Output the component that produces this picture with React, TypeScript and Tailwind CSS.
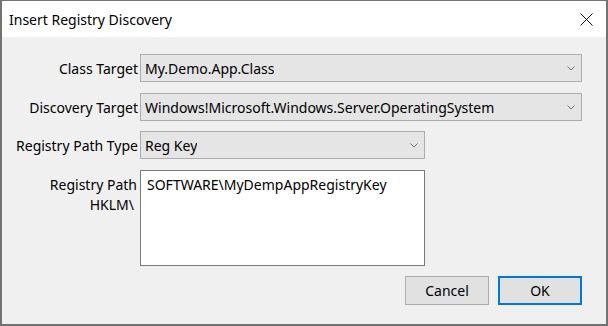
import React from "react";

function Chevron() {
  return (
    <svg width="8" height="5" viewBox="0 0 8 5" className="shrink-0">
      <path d="M0.5 0.5 L4 4 L7.5 0.5" fill="none" stroke="#707070" strokeWidth="1" />
    </svg>
  );
}

function Combo({ value, width }: { value: string; width: string }) {
  return (
    <div className={`${width} h-[28px] flex items-center justify-between bg-[#e5e5e5] border border-[#adadad] pl-[4px] pr-[6px]`}>
      <span className="truncate">{value}</span>
      <Chevron />
    </div>
  );
}

export default function App() {
  return (
    <div
      className="w-[608px] h-[326px] border-2 border-t border-[#737373] bg-[#f0f0f0] flex flex-col text-[14px] text-black overflow-hidden"
      style={{ fontFamily: '"Noto Sans", "Open Sans", sans-serif' }}
    >
      <div className="h-[36px] bg-white flex items-center justify-between pl-[7px] pr-[13px] shrink-0">
        <span className="text-[14px] pt-[1px]">Insert Registry Discovery</span>
        <svg width="13" height="13" viewBox="0 0 13 13">
          <path d="M0.5 0.5 L12.5 12.5 M12.5 0.5 L0.5 12.5" stroke="#111" strokeWidth="1" />
        </svg>
      </div>

      <div className="flex flex-col pt-[17px] pl-[1px]">
        <div className="flex items-center gap-[2px]">
          <div className="w-[135px] text-right whitespace-nowrap">Class Target</div>
          <Combo value="My.Demo.App.Class" width="w-[442px]" />
        </div>
        <div className="flex items-center gap-[2px] mt-[11px]">
          <div className="w-[135px] text-right whitespace-nowrap">Discovery Target</div>
          <Combo value="Windows!Microsoft.Windows.Server.OperatingSystem" width="w-[442px]" />
        </div>
        <div className="flex items-center gap-[2px] mt-[10px]">
          <div className="w-[135px] text-right whitespace-nowrap">Registry Path Type</div>
          <Combo value="Reg Key" width="w-[285px]" />
        </div>
        <div className="flex items-start gap-[2px] mt-[11px]">
          <div className="w-[135px] text-right leading-[20px] pt-[5px] pr-[1px]">
            <div>Registry Path</div>
            <div className="pr-[3px]">HKLM\</div>
          </div>
          <div className="w-[285px] h-[96px] bg-white border border-[#7a7a7a] px-[6px] pt-[4px] leading-[20px]">
            SOFTWARE\MyDempAppRegistryKey
          </div>
        </div>
        <div className="flex justify-end gap-[9px] mt-[10px] pr-[24px]">
          <button className="w-[84px] h-[29px] bg-[#e1e1e1] border border-[#adadad]">Cancel</button>
          <button className="w-[84px] h-[29px] bg-[#e1e1e1] border-2 border-[#0078d7]">OK</button>
        </div>
      </div>
    </div>
  );
}
